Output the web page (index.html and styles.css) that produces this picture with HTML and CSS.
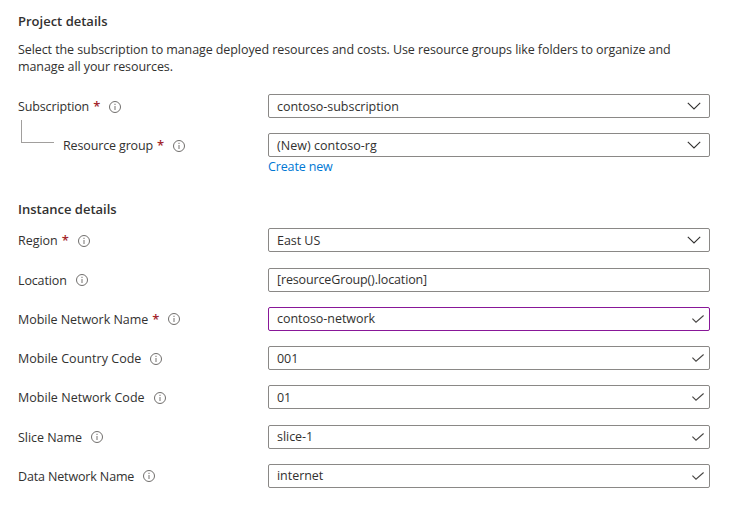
FILE: index.html
```
<!DOCTYPE html>
<html lang="en">
<head>
<meta charset="utf-8">
<title>Project details</title>
<link rel="stylesheet" href="styles.css">
</head>
<body>
<svg class="defs" aria-hidden="true">
  <symbol id="info" viewBox="0 0 12 12"><circle cx="6" cy="6" r="5.5" fill="none" stroke="#706e6c"/><path d="M6 5v4" stroke="#807e7c" stroke-width="1.1"/><path d="M6 2.8v1.2" stroke="#807e7c" stroke-width="1.1"/></symbol>
  <symbol id="chevron" viewBox="0 0 14 8"><path d="M.8.8 7 7 13.2.8" fill="none" stroke="#323130" stroke-width="1.1"/></symbol>
  <symbol id="check" viewBox="0 0 12 8"><path d="M.4 3.6 4 7.2 11.6.5" fill="none" stroke="#484644" stroke-width="1.1"/></symbol>
</svg>
<main class="form">
  <section class="project">
    <h2>Project details</h2>
    <p>Select the subscription to manage deployed resources and costs. Use resource groups like folders to organize and<br>manage all your resources.</p>
    <div class="row">
      <div class="label"><span class="tight">Subscription</span><b>*</b><svg class="info"><use href="#info"/></svg></div>
      <div class="field"><span>contoso-subscription</span><svg class="chevron"><use href="#chevron"/></svg></div>
    </div>
    <div class="row nested">
      <i class="branch"></i>
      <div class="label"><span class="tight">Resource group</span><b>*</b><svg class="info"><use href="#info"/></svg></div>
      <div class="field"><span class="wide">(New) contoso-rg</span><svg class="chevron"><use href="#chevron"/></svg></div>
    </div>
    <a class="create">Create new</a>
  </section>
  <section class="instance">
    <h2>Instance details</h2>
    <div class="row">
      <div class="label"><span>Region</span><b>*</b><svg class="info"><use href="#info"/></svg></div>
      <div class="field"><span>East US</span><svg class="chevron"><use href="#chevron"/></svg></div>
    </div>
    <div class="row spaced text-row">
      <div class="label"><span class="tight">Location</span><svg class="info"><use href="#info"/></svg></div>
      <div class="field"><span class="tight">[resourceGroup().location]</span></div>
    </div>
    <div class="row text-row">
      <div class="label"><span>Mobile Network Name</span><b>*</b><svg class="info"><use href="#info"/></svg></div>
      <div class="field active"><span>contoso-network</span><svg class="check"><use href="#check"/></svg></div>
    </div>
    <div class="row">
      <div class="label"><span class="wide">Mobile Country Code</span><svg class="info"><use href="#info"/></svg></div>
      <div class="field"><span>001</span><svg class="check"><use href="#check"/></svg></div>
    </div>
    <div class="row">
      <div class="label"><span class="wide">Mobile Network Code</span><svg class="info"><use href="#info"/></svg></div>
      <div class="field"><span>01</span><svg class="check"><use href="#check"/></svg></div>
    </div>
    <div class="row spaced text-row">
      <div class="label"><span>Slice Name</span><svg class="info"><use href="#info"/></svg></div>
      <div class="field"><span>slice-1</span><svg class="check"><use href="#check"/></svg></div>
    </div>
    <div class="row text-row">
      <div class="label"><span class="tight">Data Network Name</span><svg class="info"><use href="#info"/></svg></div>
      <div class="field"><span>internet</span><svg class="check"><use href="#check"/></svg></div>
    </div>
  </section>
</main>
</body>
</html>
```
FILE: styles.css
```
* { box-sizing: border-box; }
body {
  margin: 0;
  background: #fff;
  color: #323130;
  font: 12.5px/17px "Open Sans", "Noto Sans", sans-serif;
}
.defs { position: absolute; width: 0; height: 0; }
.form { padding: 12px 19px 0 18px; }
h2 { margin: 0; font-size: 13px; line-height: 18px; font-weight: 600; }
p { margin: 11px 0 19px; white-space: nowrap; letter-spacing: -0.085px; }
.row { display: flex; height: 24px; margin-bottom: 15px; letter-spacing: -0.04px; }
.tight { letter-spacing: -0.14px; }
.wide { letter-spacing: 0.03px; }
.spaced { margin-top: 16px; }
.label { display: flex; align-items: center; width: 250px; white-space: nowrap; }
.label b { margin-left: 4px; color: #a4262c; font-size: 13px; font-weight: 600; width: 6px; }
.info { width: 12px; height: 12px; margin-left: 9px; margin-top: 1px; }
.field {
  display: flex;
  align-items: center;
  justify-content: space-between;
  flex: 1;
  padding: 0 6px 0 8px;
  border: 1px solid #8a8886;
  border-radius: 2px;
}
.label b + .info { margin-left: 10px; }
.text-row .info { margin-top: -1px; }
.text-row .field { padding-bottom: 2px; }
.field.active { border-color: #881798; }
.chevron { width: 14px; height: 8px; margin-right: 2px; }
.check { width: 12px; height: 8px; margin-right: -1px; }
.text-row .check { margin-top: 2px; }
.nested { margin-bottom: 0; }
.branch { width: 33px; height: 23px; margin: -13px 9px 0 3px; border: solid #a19f9d; border-width: 0 0 1px 1px; }
.nested .label { width: 205px; }
.create { display: block; margin: 1px 0 0 250px; color: #0078d4; letter-spacing: -0.14px; }
.instance { margin-top: 25px; }
.instance h2 { margin-bottom: 10px; }
```
